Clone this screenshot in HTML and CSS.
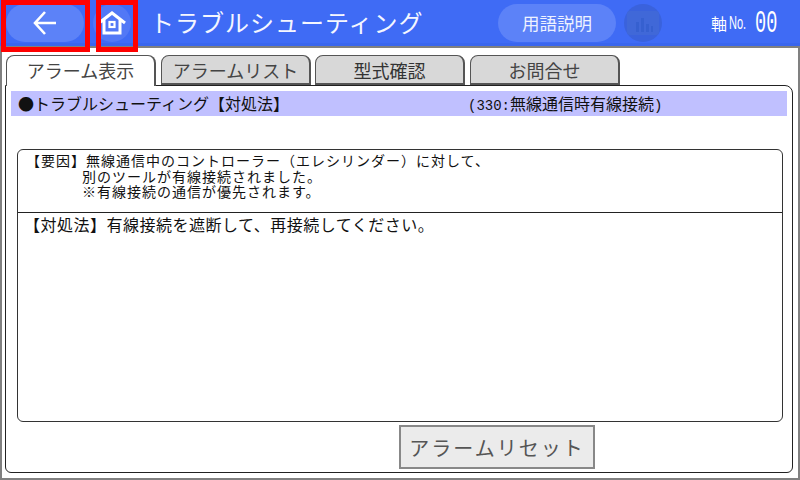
FILE: index.html
```html
<!DOCTYPE html>
<html lang="ja">
<head>
<meta charset="utf-8">
<title>トラブルシューティング</title>
<link rel="stylesheet" href="styles.css">
</head>
<body>
<div class="app">
  <header class="header">
    <div class="back">
      <svg width="26" height="26" viewBox="0 0 26 26" fill="none" stroke="#fff" stroke-width="2.6"><path d="M24 13H3M13 2L3 13l10 11"/></svg>
    </div>
    <div class="home">
      <svg width="30" height="26" viewBox="0 0 30 26" fill="none" stroke="#fff" stroke-width="3"><path d="M2 13L15 3l13 10M7 10v13h16V10"/><rect x="12.500" y="12" width="5" height="5" stroke-width="2.200"/></svg>
    </div>
    <h1 class="title">トラブルシューティング</h1>
    <div class="glossary">用語説明</div>
    <div class="chart">
      <svg width="32" height="24" viewBox="0 0 32 24"><rect width="32" height="24" rx="3" fill="#4068d8"/><path d="M9 11h3v10H9zM14 7h3v14h-3zM19 13h3v8h-3zM24 15h2v6h-2z" fill="#3660d0"/></svg>
    </div>
    <div class="axis"><span class="axis-label">軸</span><span class="axis-no">No.</span><span class="axis-value">00</span></div>
  </header>
  <span class="mark mark-back"></span>
  <span class="mark mark-home"></span>
  <nav class="tabs">
    <div class="tab active">アラーム表示</div>
    <div class="tab second">アラームリスト</div>
    <div class="tab third">型式確認</div>
    <div class="tab fourth">お問合せ</div>
  </nav>
  <main class="panel">
    <div class="banner"><span class="banner-title">●トラブルシューティング【対処法】</span><span class="code"><span class="code-latin">(330:</span>無線通信時有線接続<span class="code-latin">)</span></span></div>
    <section class="box">
      <div class="cause">
        <div class="cause-head">【要因】無線通信中のコントローラー（エレシリンダー）に対して、</div>
        <div class="cause-line">別のツールが有線接続されました。</div>
        <div class="cause-line">※有線接続の通信が優先されます。</div>
      </div>
      <div class="remedy">【対処法】有線接続を遮断して、再接続してください。</div>
    </section>
    <div class="actions"><button class="reset" type="button">アラームリセット</button></div>
  </main>
</div>
</body>
</html>
```

FILE: styles.css
```css
* { box-sizing: border-box; }
html, body { margin: 0; padding: 0; }
body { width: 800px; height: 480px; overflow: hidden; background: #fff; font-family: "Noto Sans CJK JP", "Noto Sans", sans-serif; color: #111; }
.app { position: relative; width: 800px; height: 480px; display: flex; flex-direction: column; border: 2px solid #808080; border-top: 0; background: #fff; }
.header { height: 48px; margin: 0 -2px; background: #3f6bf5; border-bottom: 2px solid #808080; box-shadow: inset 0 -3px 0 #3a66ee; display: flex; align-items: flex-start; padding-top: 4px; color: #fff; flex: none; }
.back { width: 78px; height: 38px; margin-left: 6px; border-radius: 19px; background: #5c82f8; display: flex; align-items: center; justify-content: center; }
.home { width: 38px; height: 38px; margin-left: 9px; border-radius: 50%; background: #5278f6; display: flex; align-items: center; justify-content: center; }
.title { margin: 0 0 0 19px; width: 336px; font-size: 24px; letter-spacing: 1px; font-weight: 400; line-height: 36px; color: #f4f6ff; white-space: nowrap; }
.glossary { width: 118px; height: 38px; margin-left: 12px; border-radius: 19px; background: #5c82f8; font-size: 17.500px; line-height: 38px; text-align: center; color: #eef2ff; }
.chart { width: 38px; height: 38px; margin-left: 8px; border-radius: 50%; background: #3a62dc; display: flex; align-items: center; justify-content: center; }
.axis { margin-left: 49px; display: flex; align-items: center; height: 38px; white-space: nowrap; }
.axis-label { font-size: 16px; line-height: 38px; }
.axis-no { font-family: "Liberation Sans", sans-serif; font-size: 19px; margin-left: 2px; width: 26px; display: inline-block; transform: scaleX(0.58); transform-origin: left; }
.axis-value { font-family: "Liberation Mono", monospace; font-size: 31px; display: inline-block; width: 24px; transform: scaleX(0.6); transform-origin: left; }
.mark { position: absolute; top: 0; height: 52px; border: 5px solid #f00; }
.mark-back { left: -1px; width: 89px; }
.mark-home { left: 94px; width: 42px; }
.tabs { display: flex; height: 31px; margin: 7px 0 0 4px; position: relative; z-index: 1; flex: none; }
.tab { width: 150px; height: 30px; border: 1px solid #555; border-bottom: 2px solid #555; border-right-width: 2px; border-radius: 8px 8px 0 0; background: #d8d8d8; font-size: 18px; line-height: 28px; text-align: center; color: #444; }
.tab.active { background: #fff; height: 31px; border-bottom: 0; }
.tab.second { margin-left: 5px; }
.tab.third { margin-left: 4px; color: #333; }
.tab.fourth { margin-left: 5px; }
.panel { margin: -1px 5px 0 3px; height: 388px; border: 1px solid #222; border-radius: 0 8px 6px 6px; padding: 5px 5px 0; display: flex; flex-direction: column; background: #fff; }
.banner { height: 25px; background: #c0c0ff; display: flex; padding-left: 7px; font-size: 16px; line-height: 25px; white-space: nowrap; color: #111; flex: none; }
.banner-title { width: 270px; }
.code { margin-left: 180px; font-size: 16px; }
.code-latin { font-family: "Liberation Mono", monospace; font-size: 14px; }
.box { margin: 33px 4px 0 6px; height: 273px; border: 1px solid #333; border-radius: 6px; display: flex; flex-direction: column; flex: none; }
.cause { height: 63px; border-bottom: 1px solid #222; padding: 3px 0 0 8px; font-size: 14px; letter-spacing: 1px; line-height: 15.500px; color: #111; white-space: nowrap; }
.cause-line { padding-left: 56px; }
.remedy { padding: 1px 0 0 6px; font-size: 16px; letter-spacing: 0.5px; line-height: 20px; color: #111; white-space: nowrap; }
.actions { margin: 3px 0 0 388px; }
.reset { display: block; width: 196px; height: 44px; padding: 0; border: 2px solid #888; background: #ebebeb; font-family: inherit; font-size: 20px; letter-spacing: 2px; color: #555; }
```
